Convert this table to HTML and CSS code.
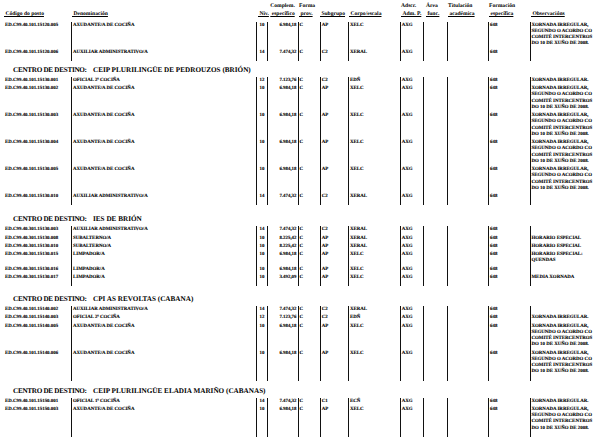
FILE: index.html
```html
<!DOCTYPE html>
<html lang="gl">
<head>
<meta charset="utf-8">
<title>Postos</title>
<link rel="stylesheet" href="styles.css">
</head>
<body>
<div class="page">
  <div class="grid head">
    <div class="h code"><br><span class="u">&nbsp;Código do posto</span></div>
    <div class="h den"><br><span class="u">&nbsp;Denominación</span></div>
    <div class="h niv"><br><span class="u">&nbsp;Niv.</span></div>
    <div class="h comp">Complem.<br><span class="u">&nbsp;específico</span></div>
    <div class="h forma">Forma<br><span class="u">&nbsp;prov.</span></div>
    <div class="h sub"><br><span class="u">&nbsp;Subgrupo</span></div>
    <div class="h corpo"><br><span class="u">&nbsp;Corpo/escala</span></div>
    <div class="h ads">Adscr.<br><span class="u">&nbsp;Adm. P.</span></div>
    <div class="h area">Área<br><span class="u">&nbsp;func.</span></div>
    <div class="h tit">Titulación<br><span class="u">&nbsp;académica</span></div>
    <div class="h form">Formación<br><span class="u">&nbsp;específica</span></div>
    <div class="h obs"><br><span class="u">&nbsp;Observacións</span></div>
  </div>

  <div class="tbl">
    <div class="grid row">
      <div class="code">ED.C99.40.101.15120.005</div><div class="den">AXUDANTE/A DE COCIÑA</div><div class="niv">10</div><div class="comp">6.984,18</div><div class="forma">C</div><div class="sub">AP</div><div class="corpo">XELC</div><div class="ads">AXG</div><div class="area"></div><div class="tit"></div><div class="form">648</div><div class="obs">XORNADA IRREGULAR,<br>SEGUNDO O ACORDO CO<br>COMITÉ INTERCENTROS<br>DO 10 DE XUÑO DE 2008.</div>
    </div>
    <div class="grid row">
      <div class="code">ED.C99.40.101.15120.006</div><div class="den">AUXILIAR ADMINISTRATIVO/A</div><div class="niv">14</div><div class="comp">7.474,32</div><div class="forma">C</div><div class="sub">C2</div><div class="corpo">XERAL</div><div class="ads">AXG</div><div class="area"></div><div class="tit"></div><div class="form">648</div><div class="obs"></div>
    </div>
  </div>

  <div class="sec sec-a"><span class="lbl">CENTRO DE DESTINO:</span>CEIP PLURILINGÜE DE PEDROUZOS (BRIÓN)</div>
  <div class="tbl">
    <div class="grid row">
      <div class="code">ED.C99.40.101.15130.001</div><div class="den">OFICIAL 2ª COCIÑA</div><div class="niv">12</div><div class="comp">7.123,76</div><div class="forma">C</div><div class="sub">C2</div><div class="corpo">EDÑ</div><div class="ads">AXG</div><div class="area"></div><div class="tit"></div><div class="form">648</div><div class="obs">XORNADA IRREGULAR.</div>
    </div>
    <div class="grid row">
      <div class="code">ED.C99.40.101.15130.002</div><div class="den">AXUDANTE/A DE COCIÑA</div><div class="niv">10</div><div class="comp">6.984,18</div><div class="forma">C</div><div class="sub">AP</div><div class="corpo">XELC</div><div class="ads">AXG</div><div class="area"></div><div class="tit"></div><div class="form">648</div><div class="obs">XORNADA IRREGULAR,<br>SEGUNDO O ACORDO CO<br>COMITÉ INTERCENTROS<br>DO 10 DE XUÑO DE 2008.</div>
    </div>
    <div class="grid row">
      <div class="code">ED.C99.40.101.15130.003</div><div class="den">AXUDANTE/A DE COCIÑA</div><div class="niv">10</div><div class="comp">6.984,18</div><div class="forma">C</div><div class="sub">AP</div><div class="corpo">XELC</div><div class="ads">AXG</div><div class="area"></div><div class="tit"></div><div class="form">648</div><div class="obs">XORNADA IRREGULAR,<br>SEGUNDO O ACORDO CO<br>COMITÉ INTERCENTROS<br>DO 10 DE XUÑO DE 2008.</div>
    </div>
    <div class="grid row">
      <div class="code">ED.C99.40.101.15130.004</div><div class="den">AXUDANTE/A DE COCIÑA</div><div class="niv">10</div><div class="comp">6.984,18</div><div class="forma">C</div><div class="sub">AP</div><div class="corpo">XELC</div><div class="ads">AXG</div><div class="area"></div><div class="tit"></div><div class="form">648</div><div class="obs">XORNADA IRREGULAR,<br>SEGUNDO O ACORDO CO<br>COMITÉ INTERCENTROS<br>DO 10 DE XUÑO DE 2008.</div>
    </div>
    <div class="grid row">
      <div class="code">ED.C99.40.101.15130.005</div><div class="den">AXUDANTE/A DE COCIÑA</div><div class="niv">10</div><div class="comp">6.984,18</div><div class="forma">C</div><div class="sub">AP</div><div class="corpo">XELC</div><div class="ads">AXG</div><div class="area"></div><div class="tit"></div><div class="form">648</div><div class="obs">XORNADA IRREGULAR,<br>SEGUNDO O ACORDO CO<br>COMITÉ INTERCENTROS<br>DO 10 DE XUÑO DE 2008.</div>
    </div>
    <div class="grid row">
      <div class="code">ED.C99.40.101.15130.010</div><div class="den">AUXILIAR ADMINISTRATIVO/A</div><div class="niv">14</div><div class="comp">7.474,32</div><div class="forma">C</div><div class="sub">C2</div><div class="corpo">XERAL</div><div class="ads">AXG</div><div class="area"></div><div class="tit"></div><div class="form">648</div><div class="obs"></div>
    </div>
  </div>

  <div class="sec sec-b"><span class="lbl">CENTRO DE DESTINO:</span>IES DE BRIÓN</div>
  <div class="tbl">
    <div class="grid row">
      <div class="code">ED.C99.40.301.15130.003</div><div class="den">AUXILIAR ADMINISTRATIVO/A</div><div class="niv">14</div><div class="comp">7.474,32</div><div class="forma">C</div><div class="sub">C2</div><div class="corpo">XERAL</div><div class="ads">AXG</div><div class="area"></div><div class="tit"></div><div class="form">648</div><div class="obs"></div>
    </div>
    <div class="grid row">
      <div class="code">ED.C99.40.301.15130.008</div><div class="den">SUBALTERNO/A</div><div class="niv">10</div><div class="comp">8.225,42</div><div class="forma">C</div><div class="sub">AP</div><div class="corpo">XERAL</div><div class="ads">AXG</div><div class="area"></div><div class="tit"></div><div class="form">648</div><div class="obs">HORARIO ESPECIAL</div>
    </div>
    <div class="grid row">
      <div class="code">ED.C99.40.301.15130.010</div><div class="den">SUBALTERNO/A</div><div class="niv">10</div><div class="comp">8.225,42</div><div class="forma">C</div><div class="sub">AP</div><div class="corpo">XERAL</div><div class="ads">AXG</div><div class="area"></div><div class="tit"></div><div class="form">648</div><div class="obs">HORARIO ESPECIAL</div>
    </div>
    <div class="grid row">
      <div class="code">ED.C99.40.301.15130.015</div><div class="den">LIMPADOR/A</div><div class="niv">10</div><div class="comp">6.984,18</div><div class="forma">C</div><div class="sub">AP</div><div class="corpo">XELC</div><div class="ads">AXG</div><div class="area"></div><div class="tit"></div><div class="form">648</div><div class="obs">HORARIO ESPECIAL:<br>QUENDAS</div>
    </div>
    <div class="grid row">
      <div class="code">ED.C99.40.301.15130.016</div><div class="den">LIMPADOR/A</div><div class="niv">10</div><div class="comp">6.984,18</div><div class="forma">C</div><div class="sub">AP</div><div class="corpo">XELC</div><div class="ads">AXG</div><div class="area"></div><div class="tit"></div><div class="form">648</div><div class="obs"></div>
    </div>
    <div class="grid row">
      <div class="code">ED.C99.40.301.15130.017</div><div class="den">LIMPADOR/A</div><div class="niv">10</div><div class="comp">3.492,09</div><div class="forma">C</div><div class="sub">AP</div><div class="corpo">XELC</div><div class="ads">AXG</div><div class="area"></div><div class="tit"></div><div class="form">648</div><div class="obs">MEDIA XORNADA</div>
    </div>
  </div>

  <div class="sec sec-c"><span class="lbl">CENTRO DE DESTINO:</span>CPI AS REVOLTAS (CABANA)</div>
  <div class="tbl">
    <div class="grid row">
      <div class="code">ED.C99.40.101.15140.002</div><div class="den">AUXILIAR ADMINISTRATIVO/A</div><div class="niv">14</div><div class="comp">7.474,32</div><div class="forma">C</div><div class="sub">C2</div><div class="corpo">XERAL</div><div class="ads">AXG</div><div class="area"></div><div class="tit"></div><div class="form">648</div><div class="obs"></div>
    </div>
    <div class="grid row">
      <div class="code">ED.C99.40.101.15140.003</div><div class="den">OFICIAL 2ª COCIÑA</div><div class="niv">12</div><div class="comp">7.123,76</div><div class="forma">C</div><div class="sub">C2</div><div class="corpo">EDÑ</div><div class="ads">AXG</div><div class="area"></div><div class="tit"></div><div class="form">648</div><div class="obs">XORNADA IRREGULAR.</div>
    </div>
    <div class="grid row">
      <div class="code">ED.C99.40.101.15140.005</div><div class="den">AXUDANTE/A DE COCIÑA</div><div class="niv">10</div><div class="comp">6.984,18</div><div class="forma">C</div><div class="sub">AP</div><div class="corpo">XELC</div><div class="ads">AXG</div><div class="area"></div><div class="tit"></div><div class="form">648</div><div class="obs">XORNADA IRREGULAR,<br>SEGUNDO O ACORDO CO<br>COMITÉ INTERCENTROS<br>DO 10 DE XUÑO DE 2008.</div>
    </div>
    <div class="grid row">
      <div class="code">ED.C99.40.101.15140.006</div><div class="den">AXUDANTE/A DE COCIÑA</div><div class="niv">10</div><div class="comp">6.984,18</div><div class="forma">C</div><div class="sub">AP</div><div class="corpo">XELC</div><div class="ads">AXG</div><div class="area"></div><div class="tit"></div><div class="form">648</div><div class="obs">XORNADA IRREGULAR,<br>SEGUNDO O ACORDO CO<br>COMITÉ INTERCENTROS<br>DO 10 DE XUÑO DE 2008.</div>
    </div>
  </div>

  <div class="sec sec-d"><span class="lbl">CENTRO DE DESTINO:</span>CEIP PLURILINGÜE ELADIA MARIÑO (CABANAS)</div>
  <div class="tbl">
    <div class="grid row">
      <div class="code">ED.C99.40.101.15150.001</div><div class="den">OFICIAL 1ª COCIÑA</div><div class="niv">14</div><div class="comp">7.474,32</div><div class="forma">C</div><div class="sub">C1</div><div class="corpo">ECÑ</div><div class="ads">AXG</div><div class="area"></div><div class="tit"></div><div class="form">648</div><div class="obs">XORNADA IRREGULAR.</div>
    </div>
    <div class="grid row">
      <div class="code">ED.C99.40.101.15150.003</div><div class="den">AXUDANTE/A DE COCIÑA</div><div class="niv">10</div><div class="comp">6.984,18</div><div class="forma">C</div><div class="sub">AP</div><div class="corpo">XELC</div><div class="ads">AXG</div><div class="area"></div><div class="tit"></div><div class="form">648</div><div class="obs">XORNADA IRREGULAR,<br>SEGUNDO O ACORDO CO<br>COMITÉ INTERCENTROS<br>DO 10 DE XUÑO DE 2008.</div>
    </div>
  </div>
</div>
</body>
</html>
```

FILE: styles.css
```css
* { box-sizing: border-box; }
html, body { margin: 0; padding: 0; background: #fff; }
body {
  font-family: "Liberation Serif", "Times New Roman", serif;
  font-weight: bold;
  color: #000;
  text-rendering: geometricPrecision;
}
.page { width: 615px; height: 439px; overflow: hidden; }

.grid {
  display: grid;
  grid-template-columns: 71px 185px 11px 31px 22px 28px 52px 23px 24px 41px 42px 1fr;
}

/* header */
.head { font-size: 5.6px; line-height: 8px; padding-top: 2px; margin-bottom: 3.5px; }
.head > div { white-space: nowrap; }
.head .code { padding-left: 4px; }
.head .den { padding-left: 1px; }
.head .niv { padding-left: 2px; }
.head .comp { text-align: center; }
.head .forma { padding-left: 1px; }
.head .sub { padding-left: 0; }
.head .corpo { padding-left: 1px; }
.head .ads { padding-left: 1px; }
.head .area { padding-left: 3px; }
.head .tit { padding-left: 1px; }
.head .form { padding-left: 1px; }
.head .obs { padding-left: 1px; }
.u { text-decoration: underline; text-decoration-thickness: 0.5px; text-underline-offset: 0.6px; }

/* data rows */
.row { font-size: 4.9px; line-height: 6.25px; -webkit-text-stroke: 0.1px #000; }
.row > div { padding: 1px 0; white-space: nowrap; border-left: 1px solid #111; }
.row > .code { border-left: none; padding-left: 5px; }
.tbl .row:last-child > div { padding-bottom: 5px; }
.row > .den { padding-left: 1px; }
.row > .niv { text-align: center; }
.row > .comp { text-align: right; padding-right: 1.5px; }
.row > .forma { padding-left: 0.5px; }
.row > .sub { padding-left: 0.7px; }
.row > .corpo { padding-left: 1px; }
.row > .ads { padding-left: 0.7px; }
.row > .form { padding-left: 1px; }
.row > .obs { padding-left: 0.5px; }

/* section titles */
.sec {
  font-size: 7.2px;
  line-height: 10px;
  margin: 7px 0 2px;
  padding-left: 13px;
  white-space: nowrap;
}
.sec-a { margin-top: 4px; }
.sec-b { margin-top: 9px; }
.sec-c { margin-top: 8px; }
.sec-d { margin-top: 5px; }
.sec .lbl { display: inline-block; width: 80px; letter-spacing: -0.3px; }
```
